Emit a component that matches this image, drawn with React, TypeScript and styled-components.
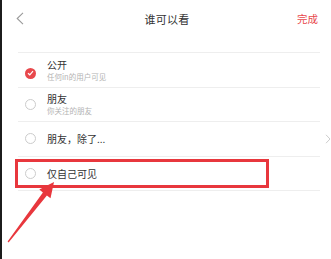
import styled, { createGlobalStyle } from "styled-components";

const GlobalStyle = createGlobalStyle`
    html, body {
        margin: 0;
        padding: 0;
        background: #ffffff;
    }
    body {
        font-family: "Noto Sans CJK SC", "Noto Sans", sans-serif;
    }
`;

const Page = styled.div`
    position: relative;
    width: 331px;
    height: 259px;
    box-sizing: border-box;
    border-left: 2px solid #1c1c1c;
    background: #ffffff;
    overflow: hidden;
`;

const Header = styled.div`
    height: 37px;
    display: flex;
    align-items: center;
    justify-content: space-between;
    padding: 0 13px 0 14px;
`;

const BackButton = styled.div`
    width: 10px;
    height: 14px;
    display: flex;
    align-items: center;
`;

const Title = styled.div`
    font-size: 11px;
    color: #333333;
    letter-spacing: 0.2px;
    margin-left: 11px;
`;

const Done = styled.div`
    font-size: 10.5px;
    color: #e8484c;
`;

const List = styled.div`
    margin: 15px 11px 0 16px;
    border-top: 1px solid #eeeeee;
`;

const Row = styled.div`
    position: relative;
    height: 33.5px;
    display: flex;
    align-items: center;
    border-bottom: 1px solid #eeeeee;
    padding-left: 7px;
`;

const Radio = styled.div<{ checked?: boolean }>`
    width: 11px;
    height: 11px;
    box-sizing: border-box;
    border-radius: 50%;
    flex-shrink: 0;
    display: flex;
    align-items: center;
    justify-content: center;
    border: ${(p) => (p.checked ? "none" : "1px solid #cccccc")};
    background: ${(p) => (p.checked ? "#e8484c" : "#ffffff")};
    margin-top: ${(p) => (p.checked ? "7px" : "0")};
`;

const Texts = styled.div`
    margin-left: 11px;
    display: flex;
    flex-direction: column;
    flex: 1;
`;

const Label = styled.div`
    font-size: 10px;
    line-height: 13px;
    color: #333333;
`;

const Sub = styled.div`
    font-size: 7.5px;
    line-height: 11px;
    color: #b3b3b3;
`;

const Chevron = styled.div`
    margin-right: -11px;
    display: flex;
    align-items: center;
`;

const Highlight = styled.div`
    position: absolute;
    left: -3px;
    top: 2px;
    width: 254px;
    height: 29px;
    box-sizing: border-box;
    border: 3px solid #e8373d;
`;

const Arrow = styled.svg`
    position: absolute;
    left: -2px;
    top: 0;
    pointer-events: none;
`;

type Option = {
    label: string;
    sub?: string;
    checked?: boolean;
    more?: boolean;
    marked?: boolean;
};

const options: Option[] = [
    { label: "公开", sub: "任何in的用户可见", checked: true },
    { label: "朋友", sub: "你关注的朋友" },
    { label: "朋友，除了...", more: true },
    { label: "仅自己可见", marked: true },
];

const App = () => {
    return (
        <>
            <GlobalStyle />
            <Page>
                <Header>
                    <BackButton>
                        <svg width="8" height="13" viewBox="0 0 8 13">
                            <path d="M7 0.8 L1.2 6.5 L7 12.2" fill="none" stroke="#9a9a9a" strokeWidth="1.1" />
                        </svg>
                    </BackButton>
                    <Title>谁可以看</Title>
                    <Done>完成</Done>
                </Header>
                <List>
                    {options.map((o, i) => (
                        <Row key={i}>
                            <Radio checked={o.checked}>
                                {o.checked && (
                                    <svg width="7" height="6" viewBox="0 0 7 6">
                                        <path d="M1 3.2 L2.8 4.8 L6 1.2" fill="none" stroke="#ffffff" strokeWidth="1.2" />
                                    </svg>
                                )}
                            </Radio>
                            <Texts>
                                <Label>{o.label}</Label>
                                {o.sub && <Sub>{o.sub}</Sub>}
                            </Texts>
                            {o.more && (
                                <Chevron>
                                    <svg width="6" height="10" viewBox="0 0 6 10">
                                        <path d="M1 0.8 L5 5 L1 9.2" fill="none" stroke="#cccccc" strokeWidth="1" />
                                    </svg>
                                </Chevron>
                            )}
                            {o.marked && <Highlight />}
                        </Row>
                    ))}
                </List>
                <Arrow width="331" height="259" viewBox="0 0 331 259">
                    <polygon
                        points="54,182 50.5,198.2 46.9,195.4 8.6,242.4 7.6,241.6 42.9,192.4 39.3,189.6"
                        fill="#e8373d"
                    />
                </Arrow>
            </Page>
        </>
    );
};

export default App;
